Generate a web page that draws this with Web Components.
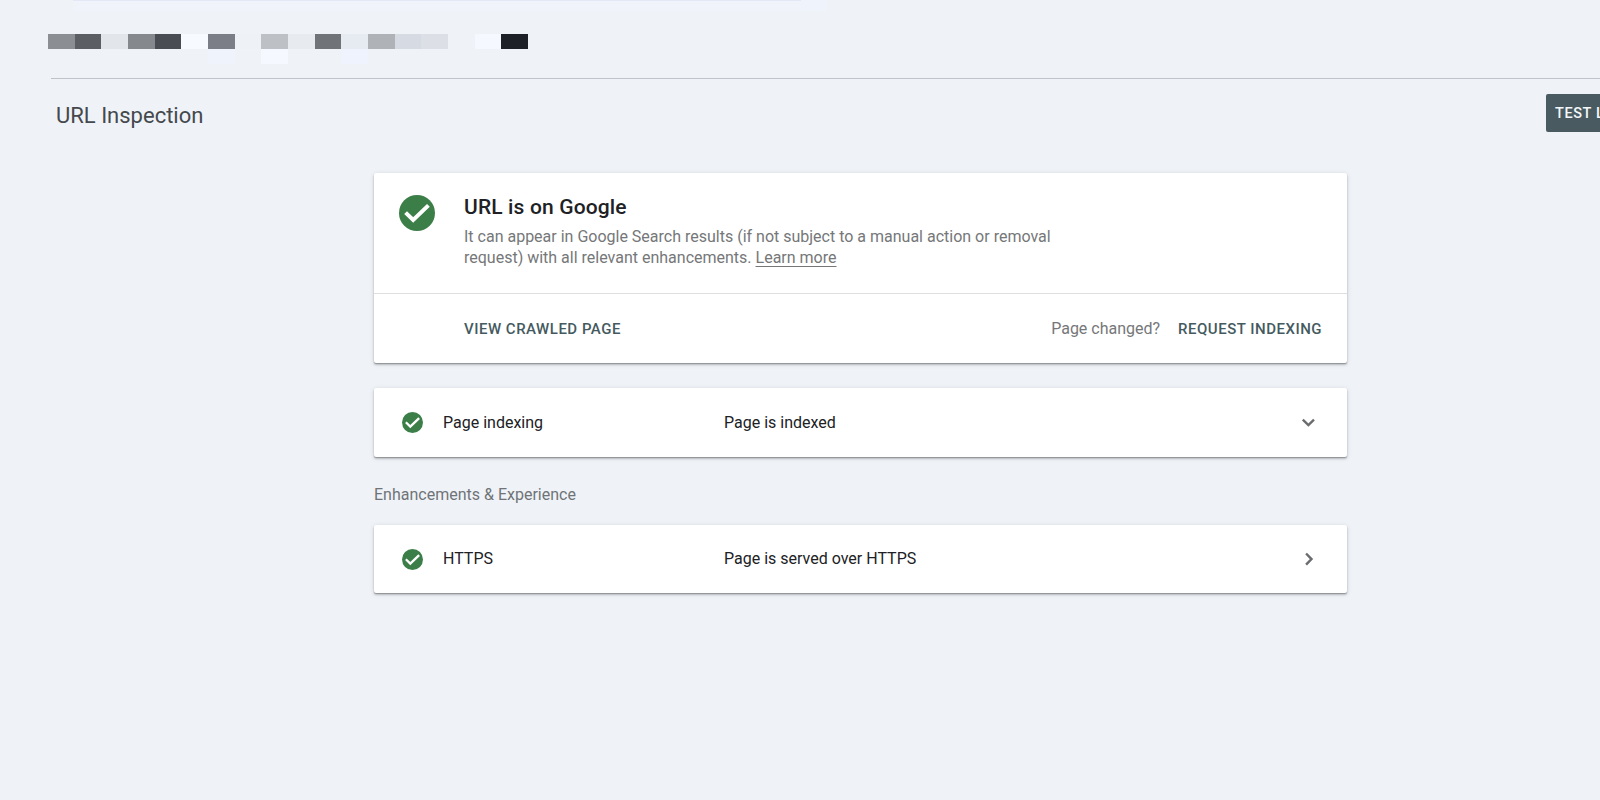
<!DOCTYPE html>
<html lang="en">
<head>
<meta charset="utf-8">
<title>URL Inspection</title>
<style>
    html, body {
        margin: 0;
        height: 100%;
        overflow: hidden;
        background: #eff3f8;
        font-family: Roboto, "Liberation Sans", sans-serif;
    }
</style>
</head>
<body>
<inspection-page></inspection-page>

<script>
// Green round badge with a white tick
class StatusIcon extends HTMLElement {
    constructor() {
        super();
        this.attachShadow({ mode: 'open' });
        this.shadowRoot.innerHTML = `
            <style>
                :host { display: block; flex: none; width: 21px; height: 21px; }
                :host([large]) { width: 36px; height: 36px; }
                svg { display: block; width: 100%; height: 100%; }
            </style>
            <svg viewBox="0 0 36 36">
                <circle cx="18" cy="18" r="18" fill="#3b7e47"/>
                <path d="M6.6 17.6 L14.2 25 L29.4 10.4" fill="none" stroke="#fff" stroke-width="4"/>
            </svg>
        `;
    }
}
customElements.define('status-icon', StatusIcon);

class ChevronIcon extends HTMLElement {
    constructor() {
        super();
        this.attachShadow({ mode: 'open' });
        this.shadowRoot.innerHTML = `
            <style>
                :host { display: block; flex: none; width: 24px; height: 24px; }
                :host([direction="right"]) svg { transform: translate(1.5px, 0.5px) rotate(-90deg); }
                svg { display: block; }
            </style>
            <svg width="24" height="24" viewBox="0 0 24 24">
                <path d="M6.8 8.6 L12.4 14 L18 8.6" fill="none" stroke="#6a6c6e" stroke-width="2.4"/>
            </svg>
        `;
    }
}
customElements.define('chevron-icon', ChevronIcon);

// Redacted address: one cell per colour, "-" leaves the cell empty
class PixelStrip extends HTMLElement {
    constructor() {
        super();
        this.attachShadow({ mode: 'open' });
        this.shadowRoot.innerHTML = `
            <style>
                :host { display: block; width: 480px; }
                .row { display: grid; grid-template-columns: repeat(18, 1fr); height: 15px; }
            </style>
        `;
    }

    connectedCallback() {
        this.getAttribute('cells').split('/').forEach((line) => {
            const row = document.createElement('div');
            row.className = 'row';
            line.trim().split(/\s+/).forEach((color) => {
                const cell = document.createElement('span');
                if (color !== '-') cell.style.background = '#' + color;
                row.append(cell);
            });
            this.shadowRoot.append(row);
        });
    }
}
customElements.define('pixel-strip', PixelStrip);

class PageCard extends HTMLElement {
    constructor() {
        super();
        this.attachShadow({ mode: 'open' });
        this.shadowRoot.innerHTML = `
            <style>
                :host {
                    display: block;
                    background: #fff;
                    border-radius: 2px;
                    box-shadow: 0 1px 1px rgba(0, 0, 0, 0.24), 0 2px 2px rgba(0, 0, 0, 0.14), 0 1px 5px rgba(0, 0, 0, 0.14);
                }
            </style>
            <slot></slot>
        `;
    }
}
customElements.define('page-card', PageCard);

class TextButton extends HTMLElement {
    constructor() {
        super();
        this.attachShadow({ mode: 'open' });
        this.shadowRoot.innerHTML = `
            <style>
                :host { display: block; }
                button {
                    display: block;
                    border: none;
                    padding: 0;
                    background: none;
                    color: #455a60;
                    font: 500 15px/20px Roboto, "Liberation Sans", sans-serif;
                    letter-spacing: inherit;
                    white-space: nowrap;
                    cursor: pointer;
                }
                :host([filled]) button {
                    height: 38px;
                    padding: 2px 16px 0 9px;
                    border-radius: 2px;
                    background: #495b61;
                    color: #f4f8fa;
                    font-size: 14.5px;
                }
            </style>
            <button><slot></slot></button>
        `;
    }
}
customElements.define('text-button', TextButton);

class ResultRow extends HTMLElement {
    constructor() {
        super();
        this.attachShadow({ mode: 'open' });
        this.shadowRoot.innerHTML = `
            <style>
                :host { display: block; }
                .row {
                    display: grid;
                    grid-template-columns: 21px 261px 1fr 24px;
                    column-gap: 20px;
                    align-items: center;
                    height: var(--row-height, 69px);
                    padding: 0 27px 0 28px;
                    color: #202124;
                    font-size: 16px;
                    line-height: 20px;
                }
            </style>
            <page-card>
                <div class="row">
                    <status-icon></status-icon>
                    <slot name="label"></slot>
                    <slot name="value"></slot>
                    <chevron-icon></chevron-icon>
                </div>
            </page-card>
        `;
    }

    connectedCallback() {
        const direction = this.getAttribute('chevron') || 'down';
        this.shadowRoot.querySelector('chevron-icon').setAttribute('direction', direction);
    }
}
customElements.define('result-row', ResultRow);

class VerdictCard extends HTMLElement {
    constructor() {
        super();
        this.attachShadow({ mode: 'open' });
        this.shadowRoot.innerHTML = `
            <style>
                :host { display: block; }
                .summary {
                    display: flex;
                    gap: 29px;
                    box-sizing: border-box;
                    height: 120px;
                    padding: 22px 25px 0;
                }
                h2 {
                    margin: 0;
                    color: #202124;
                    font-size: 21px;
                    font-weight: 500;
                    line-height: 24px;
                    letter-spacing: 0.15px;
                }
                p {
                    margin: 7px 0 0;
                    color: #757779;
                    font-size: 16px;
                    line-height: 21px;
                    white-space: nowrap;
                }
                a { color: inherit; text-underline-offset: 3px; text-decoration-skip-ink: none; }
                .actions {
                    display: flex;
                    align-items: center;
                    box-sizing: border-box;
                    height: 70px;
                    padding: 0 25px 0 90px;
                    border-top: 1px solid #dcdee0;
                }
                .hint { margin: 0 18px 0 auto; color: #757779; font-size: 16px; }
            </style>
            <page-card>
                <div class="summary">
                    <status-icon large></status-icon>
                    <div>
                        <h2>URL is on Google</h2>
                        <p>It can appear in Google Search results (if not subject to a manual action or removal<br>
                        request) with all relevant enhancements. <a href="#">Learn more</a></p>
                    </div>
                </div>
                <div class="actions">
                    <text-button style="letter-spacing: 0.5px">VIEW CRAWLED PAGE</text-button>
                    <span class="hint">Page changed?</span>
                    <text-button style="letter-spacing: 0.5px">REQUEST INDEXING</text-button>
                </div>
            </page-card>
        `;
    }
}
customElements.define('verdict-card', VerdictCard);

class InspectionPage extends HTMLElement {
    constructor() {
        super();
        this.attachShadow({ mode: 'open' });
        this.shadowRoot.innerHTML = `
            <style>
                :host { display: block; height: 800px; overflow: hidden; }
                .search-edge {
                    width: 728px;
                    height: 11px;
                    margin-left: 73px;
                    box-sizing: border-box;
                    border-top: 1px solid #e2e8f5;
                    background: #f1f3fa;
                    box-shadow: 26px 0 #eff3fc;
                }
                pixel-strip { margin: 23px 0 0 48px; }
                header {
                    display: flex;
                    justify-content: space-between;
                    align-items: flex-start;
                    margin: 14px 0 0 51px;
                    padding: 15px 0 0 5px;
                    border-top: 1px solid #bfc3c9;
                }
                h1 {
                    margin: 9px 0 0;
                    color: #45494d;
                    font-size: 22px;
                    font-weight: 400;
                    line-height: 26px;
                }
                /* the button runs off the right edge of the window */
                .action { width: 54px; overflow: hidden; }
                main { width: 973px; margin: 41px 0 0 374px; }
                result-row { margin-top: 25px; }
                h3 {
                    margin: 28px 0 0;
                    color: #6f7377;
                    font-size: 16px;
                    font-weight: 400;
                    line-height: 20px;
                }
                h3 + result-row { margin-top: 20px; --row-height: 68px; }
            </style>
            <div class="search-edge"></div>
            <pixel-strip cells="8b8e92 5b5e62 e2e5e9 85888c 494c53 f7faff 7b7e86 eef1f6 bdc1c5 e7eaee 707378 e6eaf1 afb2b7 d6dae3 dcdfe5 - f5f9ff 1d2027
                / - - - - - - eef3fc - f5f9ff - - eff3fe - - - - - -"></pixel-strip>
            <header>
                <h1>URL Inspection</h1>
                <div class="action"><text-button filled style="letter-spacing: 0.6px">TEST LIVE URL</text-button></div>
            </header>
            <main>
                <verdict-card></verdict-card>
                <result-row chevron="down">
                    <span slot="label">Page indexing</span>
                    <span slot="value">Page is indexed</span>
                </result-row>
                <h3>Enhancements &amp; Experience</h3>
                <result-row chevron="right">
                    <span slot="label">HTTPS</span>
                    <span slot="value">Page is served over HTTPS</span>
                </result-row>
            </main>
        `;
    }
}
customElements.define('inspection-page', InspectionPage);
</script>
</body>
</html>
